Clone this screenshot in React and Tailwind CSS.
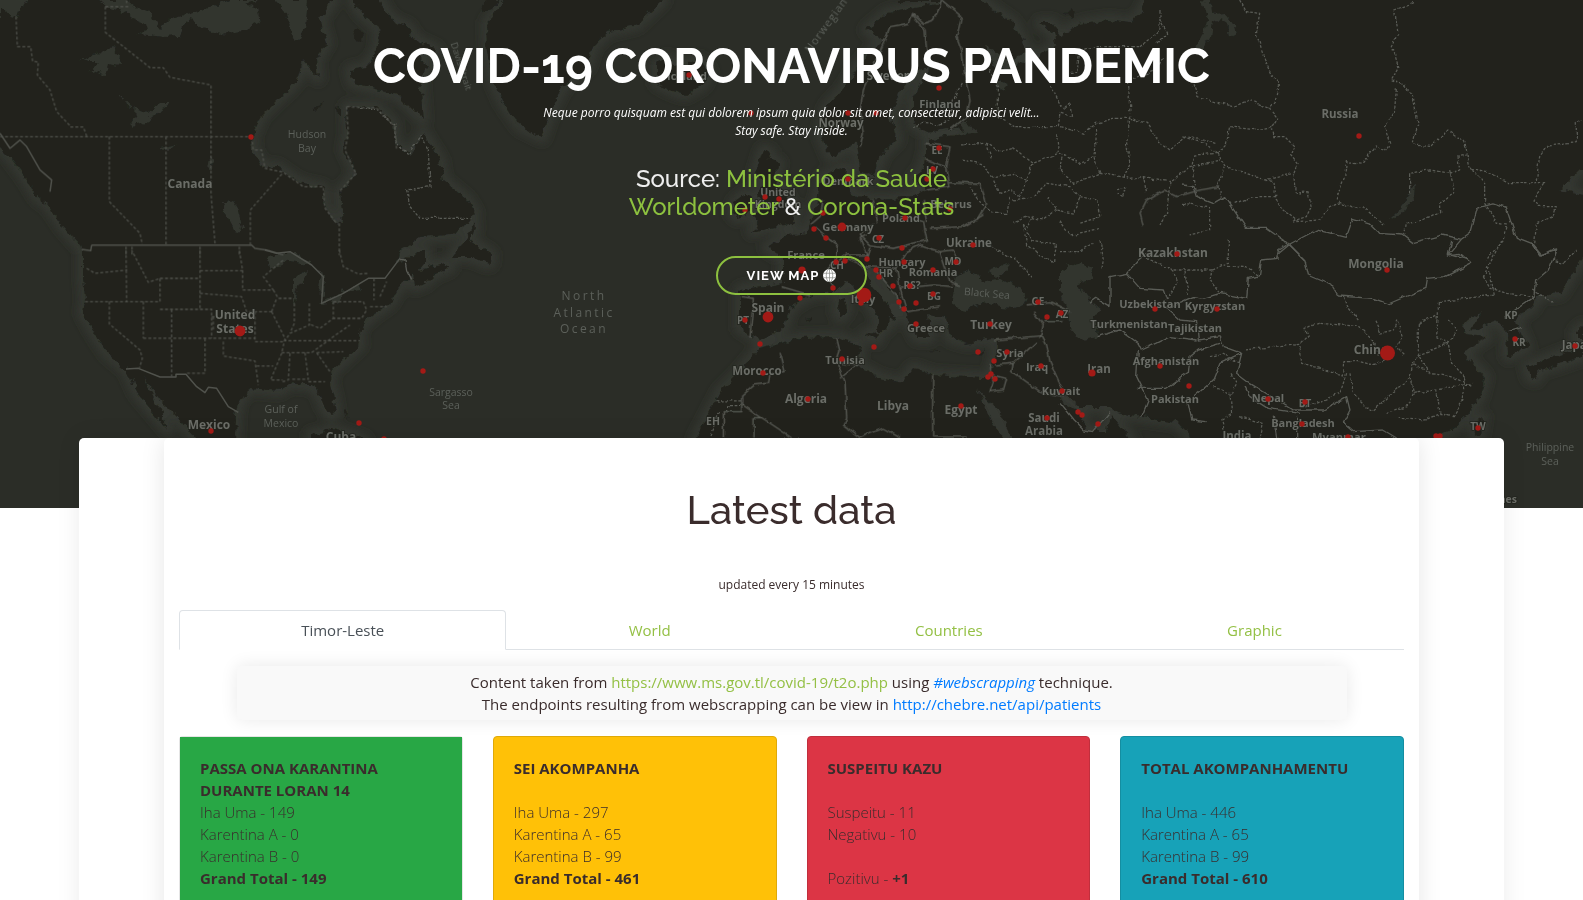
import React from "react";

const LAND = [
  // North America
  "M0 0H334L320 20L327 43L316 60L318 78L303 60L297 80L290 88L277 100L260 117L252 137L253 150L263 168L277 167L300 183L323 188L325 207L333 222L343 223L340 192L357 173L345 150L348 133L347 107L377 107L393 123L395 143L410 155L423 133L440 160L443 180L467 200L475 213L463 227L450 235L420 237L400 250L397 262L425 250L425 263L419 270L443 263L450 268L433 275L425 283L415 287L413 274L400 286L390 303L373 315L362 325L358 333L360 345L347 357L333 370L329 380L333 395L336 413L330 416L323 405L320 395L312 385L303 385L290 383L280 391L268 390L252 388L243 395L238 403L236 415L235 440H200L192 435L177 417L160 400L143 377L160 410L168 430L157 417L137 393L127 370L107 353L92 330L83 313L85 300L83 277L83 250L63 227L50 207L37 197L25 177L10 157L0 147Z",
  // Baffin Island
  "M353 0H380L386 12L395 22L408 27L416 40L437 50L420 54L427 67L420 77L423 120L400 97L380 90L353 83L350 70L367 67L377 50L380 30L360 12Z",
  // Greenland
  "M505 0L487 23L488 50L493 80L503 103L520 127L542 138L547 123L553 107L563 87L587 67L593 47L607 32L637 25L663 0Z",
  // Newfoundland, Iceland, Ireland, Great Britain
  "M474 222L466 240L455 252L454 257L472 257L484 263L490 264L491 254L478 246L470 240L475 228Z",
  "M657 64L668 58L675 66L700 60L709 72L703 85L685 95L670 90L657 83Z",
  "M735 202L745 194L753 197L752 212L738 218L732 213Z",
  "M763 150L770 152L768 158L779 163L773 177L784 190L789 204L797 209L792 224L770 227L752 232L758 222L752 216L764 205L758 195L763 182L756 172Z",
  // Europe and Asia
  "M960 0H980L1013 23L1027 50L1013 60L987 47L993 67L1007 72L1019 64L1036 56L1057 47L1054 34L1040 23H1053L1062 38L1070 28L1087 23L1110 20L1130 23L1140 15L1147 0H1583V167L1560 190L1583 195V257L1560 293L1537 295L1533 307L1515 320L1527 347L1508 357L1507 333L1497 320L1470 330L1483 310L1460 327L1467 335L1487 337L1463 353L1485 377L1480 397L1457 427L1427 440H1193L1177 422L1142 417L1117 413L1110 407L1080 407L1063 393L1058 397L1080 413L1087 430L1107 432L1110 413L1132 440H1013L997 408L983 395L977 388L993 422L1003 440H695L720 392L737 375L760 348L800 338L837 337L860 345L857 365L880 378L903 383L913 368L933 375L983 378L990 378L997 348L993 338L967 343L950 338L947 318L927 315L930 338L917 338L907 318L897 298L877 270L863 268L867 278L887 305L897 317L893 320L888 317L887 328L880 332L878 318L867 298L847 282L833 292L810 295L790 308L783 328L760 340L740 328V290L783 282V258L767 248L787 235L807 232L813 217L817 200L823 177L847 167L845 187L857 197L880 200L913 197L927 190L913 180L923 167L927 150V140L967 133L953 128L927 133L913 123V100L923 83L930 67L917 70L900 90L890 117L897 140L883 153L873 177L860 170L857 143L830 157L820 133L827 107L843 90L857 67L883 40L867 30L887 13L915 8Z",
  // Islands
  "M838 300L845 298L846 312L840 318L837 312ZM865 334L880 332L877 341Z",
  "M1527 367L1540 362L1583 345V356L1554 366L1540 370L1536 379L1530 378ZM1576 332L1583 326V340L1576 340Z",
  "M1474 424L1483 417L1480 435L1475 436ZM311 435L335 430L365 440H311Z",
  // Land running off the edges of the map
  "M30 -14H334V2H30ZM353 -14H380V2H353ZM507 -14H661V2H507ZM900 -14H980V2H900ZM1147 -14H1597V2H1147ZM1581 -14H1597V168H1581ZM-14 20H2V144H-14ZM1581 196H1597V254H1581Z",
];

const SEAS = [
  // Black Sea, Sea of Azov, Caspian
  "M953 292L957 276L967 270L977 275L983 282L1000 278L1020 287L1027 302L1015 308L1000 307L983 302L967 310L951 306Z",
  "M988 271L1010 263L1005 274L996 278Z",
  "M1060 270L1080 262L1094 268L1091 279L1078 284L1088 298L1102 310L1094 315L1097 337L1080 340L1068 327L1067 307L1060 290Z",
  // Arctic waters of Canada
  "M0 0H30L20 8L17 17L9 14L0 8ZM98 0L108 8L125 12L132 18L145 23L147 30L137 34L166 37L178 36L185 22L192 17L199 29L222 34L247 29L260 22L257 8L245 5L262 0L228 0L214 7L194 11L182 16L168 20L160 28L150 12L135 8L125 0Z",
  "M273 0L284 12L296 43L305 28L308 0Z",
  "M80 60L95 55L112 47L120 56L119 66L108 64L105 76L90 70L100 62L86 62Z",
  "M118 94L123 97L127 106L148 113L160 103L172 103L150 117L145 123L130 126L138 113Z",
  // Lakes
  "M268 258L285 251L300 256L313 264L302 263L290 261L277 266L270 270ZM294 304V280L301 273L308 272L299 285ZM316 270L325 276L324 296L318 292L321 277ZM319 303L341 293L341 299L323 304ZM340 290L360 286L362 290L343 292Z",
  "M222 203L231 200L237 210L242 228L236 232L229 219ZM209 158L213 160L211 169L207 169ZM160 146L178 143L165 150Z",
  // Ladoga, Onega, Baikal, Ob gulf
  "M960 122L972 125L977 133L965 134ZM995 80L1007 84L1004 91L997 88Z",
  "M1415 182L1414 198L1404 211L1387 222L1403 206Z",
  "M1203 0H1210L1211 14L1225 13L1234 24L1236 38L1230 36L1228 24L1220 18L1212 22L1210 38L1200 52L1193 50L1205 32L1208 20Z",
];

// Administrative borders, drawn dashed. Each sheet has its own origin and a scale of three.
const DASHED = [
  [0, 0, "M0 410H755M48 50L52 140H92L98 184L115 186L112 225L150 270L170 335L208 375L210 381H250L260 408M316 20V97L450 203H490L510 232L633 255V580L645 730M316 20H385M380 0V15M328 410V605L420 700L427 733M498 410V733M751 735V630L850 517M1018 670V765M1040 320L1130 325L1185 380L1190 450M1040 320L1045 400L1035 450L1068 520L1020 573M755 410L760 450H785L795 505L850 517L910 560H970L975 625L1010 670M378 740V765M396 740V765M600 740V765M718 740V765"],
  [0, 250, "M260 55L285 70L382 60M378 0L380 155M255 155H480V85L445 97L395 0M480 85H600M600 0V178M480 178H635V265M328 155V222L420 300L427 325L418 355M430 155V265M515 178V380M430 265H765M615 265V370H560M600 62H728L718 0M600 130L725 140L740 185H815M728 120H820L790 80L850 30M728 60V120M820 120L835 145H880M815 185L830 145M815 185L855 265L845 310L812 390H848M765 185V275H850M670 275V318L765 333L775 405M770 348H820M883 160V220L870 250M928 160V225L870 250L855 272H1080M1000 155V205L960 235L928 222M1000 155H1090L1100 180L1085 205H1000M845 308H935L1000 260L1050 225M870 310L865 390L848 395M915 308L925 388H870M925 395H975M950 308L990 365M950 308L1030 305M1122 85V150M1140 140L1160 95M1110 170H1160M1018 0L1030 50L1075 72L1105 70M635 200H650M640 200V240"],
  [360, 0, "M0 325L45 325L70 350L105 375V430L145 465L185 405L205 450L210 560L140 570L150 620L180 655H340"],
  [780, 0, "M950 140H1080L1140 90V30M1140 60L1160 100L1130 130M870 220H890L900 150L945 140M1045 235L1050 340M1050 240L1130 210L1150 170M810 255L850 330L870 310L875 350L840 340L835 380L705 380L655 350V260L625 200M840 380L910 400L950 370L1000 355H1050L1100 370L1130 420L1170 450L1220 410L1310 430M1050 350L1040 430L1050 490L1030 530M830 400L835 460L760 490L735 540L700 520L640 530L600 490L540 480M540 435L620 430L660 455L700 445L760 490M620 430L635 480M840 460L900 490L940 470L960 520L880 550L840 510L850 470M740 540L720 590L690 570L660 580L640 540M950 390L945 470M960 520L1050 535L1090 530L1170 545L1230 500L1320 480M1090 530L1100 580M1170 545L1160 640L1140 675M700 600L760 590L800 550L870 560L900 590L880 640L830 630L800 590M690 590L680 640L640 640L600 610L570 560M830 630L790 660L740 650L700 670M900 590L950 600L960 650L900 670M1010 570L1040 560L1030 590L1010 580M400 380L430 370L470 375L510 360L520 300L545 250"],
  [1183, 0, "M170 0L190 35L230 40L220 100L245 180L265 225L290 250L280 300L260 325L285 355L265 385L270 410H305L335 440L325 465L345 490L335 520L340 580L375 575L385 620L370 650L325 665M30 250L45 290L150 320L200 300L260 325M265 380L220 390L140 380L130 430L105 460L60 430L0 410M105 460L35 465L30 500L40 580M105 460L125 500L190 520L245 540L335 520M125 500L105 550L115 590M245 540L270 545L275 590L300 630L345 665M155 610L210 590L275 590M690 8L635 30L645 100L625 140L645 205L625 242L665 255L690 290L705 370L690 435L745 440L795 390L845 425L860 500L905 545V610L945 670L970 675L960 720L910 780M640 265L635 330L605 380L620 430L605 455L580 435L540 490L490 485L485 530L460 600L510 625L540 620L600 675M680 580V520L740 510L800 520L830 510L825 470L850 465M800 510L815 575L770 610V635L720 660L670 672L665 705M865 505L910 515L980 548H1085L1050 600L1070 620H1120L1110 650L1060 670L1055 735M1060 540L1070 470L1095 435L1180 425V370L1200 360M340 665L410 660L440 620L475 605M0 610L80 620V690L20 705"],
  [1060, 240, "M260 55L340 90H455L450 120L475 155L500 160M340 90L350 130L320 180M375 95L385 165M505 0V70M120 0L130 60L125 90M0 35H60L100 10M455 90L490 75L560 80L598 108M555 330L635 320L720 310L745 285L735 265L775 250L845 255L900 260L945 310L955 350M850 170L860 200L895 240M720 315L725 370L850 405L855 365L900 365L940 375L990 350M870 400L880 460L935 515L975 480L1050 410L1060 370L1110 400L1175 410L1240 440M945 245L960 280L1000 270L1010 240L1030 290L1010 320L1030 340M1075 250V340L1060 370M1075 250L1135 220V185L1220 175L1300 165M1135 225L1130 290L1165 310L1075 345L1110 400M1165 240L1190 270L1165 310L1175 370L1215 410L1205 490M1050 410L1060 460L1045 500L980 520M1060 460L1130 450L1175 440L1240 430M1130 450L1140 520L1095 540L1010 530M1140 520L1180 530L1210 480M450 350L490 340L540 370M460 440L510 460L515 520L485 540L500 594M540 530L610 550L600 594M510 400L530 430L515 460M860 400L840 460L770 490L720 500M1270 110L1325 0M1270 110L1290 145L1340 160L1420 170M1300 165L1285 90M1490 30L1480 60L1510 70L1550 30M1480 190L1420 150"],
  [700, 215, "M970 30L1000 80L1070 90L1060 140L1020 120L980 90ZM1000 0L980 40M1080 20L1110 60L1200 40M850 80L940 130L1000 190M50 558H125M80 590V572H125M30 660L60 590"],
];

const SOLID = [
  [0, 0, "M275 735H755L765 745L800 750L850 765M0 400L30 445L60 420L80 440L120 510L155 540L150 575M275 735L272 752L245 748"],
  [0, 250, "M378 357L415 355L480 381H528V373H558L590 410L615 428L625 412L650 415L685 470L715 487M795 0L830 10L870 5L935 45L970 80L965 160L1030 130L1105 85H1155L1200 25"],
  [400, 220, "M0 118L15 120L20 150L35 178"],
  [780, 0, "M240 440L250 400L240 330L250 270L280 200L310 130L330 80L385 70L395 40L430 70L460 60L480 20L485 0M395 45L435 90L440 150L450 200M485 0L545 50L530 110L545 150L555 230L570 300L560 350L510 390M435 430L510 440L500 500L440 480M500 500L510 560L440 570M510 545L600 550L620 610L590 660M1320 560L1260 570L1190 590L1150 570L1100 600L1080 640L1090 675M130 600L120 650L90 675M280 600L290 670M430 600L440 670"],
  [700, 215, "M345 35L390 75L412 90L405 140L370 170M480 60L510 90L580 100L680 75L670 20L600 0M500 60L480 70L500 120L440 120L370 170L400 215M440 130L500 155L590 160L620 110L660 90L720 110L750 200L780 215M500 130L510 95M590 160L600 220L700 210L760 215M600 220L620 290L720 275M600 280L590 240L530 170M520 30L480 60M690 40L790 35L850 0M720 110L760 105L780 150M245 215L330 240M125 245L160 250L150 365M240 410L255 470L210 480L205 505L160 510L125 540V590H70V665M125 568L275 668M162 668V608H187M410 370L420 410L410 440L435 500L440 610L430 630L480 668M415 440L470 450L420 490M480 668L550 640L600 668M698 480V663H800M885 375L1025 362L1040 390L1050 440L1090 530M885 450L940 445L1010 380M870 450L880 500L870 530L910 525L920 490L880 480M940 445L935 470L1020 530L1090 545M980 270L1050 260L1110 290M1000 290L1030 330L1020 370M1030 320L1090 320"],
  [1183, 0, "M0 555L30 560L40 590L90 610L125 590L190 685H250L300 720L315 735L400 690L490 712L510 655L560 670L590 700L660 705L690 728L780 705L835 718L860 700L880 625L930 612L970 625L1000 715L1050 735L1075 765L1115 745M835 718L800 760L850 775M315 735L285 760V780M320 735L365 780"],
  [1060, 240, "M150 200V110L200 100L240 145L310 150L320 180M150 200L110 175L90 190M200 100L235 60L260 40M320 205L400 170L430 175L480 160L560 175L565 115L598 108L605 60L650 55L655 30L685 10L735 60L745 105L815 135L835 168L940 175L985 192L1095 145L1100 115L1155 110L1235 70L1200 40L1165 45L1175 0M320 205L360 240L410 245L415 300L480 290L490 320L545 340M110 290L180 270L235 310L245 330L290 310L330 290L410 300M235 330L230 410L265 480L245 530M230 445L320 445L385 400L390 350L415 330L480 310M380 490L460 420L480 370L545 340L530 400L570 430L700 510L790 510M555 440L570 470L625 505L720 520M385 490L395 540L440 545M640 530L650 594M710 530V594M790 510L860 470L870 510L850 550L880 575L970 570L1010 594M1330 235L1365 210L1425 170L1430 120L1465 90L1490 30L1440 45L1415 10M1345 275L1385 262M70 570L100 575L150 515M0 490L40 540L70 570"],
];

const LABELS = [
  ["Canada", 190, 184], ["United", 235, 315], ["States", 235, 329], ["Mexico", 209, 425], ["Cuba", 341, 437],
  ["Spain", 768, 308], ["PT", 743, 320, 10], ["Morocco", 757, 371, 11.5], ["EH", 713, 421, 10.5], ["Algeria", 806, 399],
  ["Libya", 893, 406], ["Egypt", 961, 410], ["Tunisia", 845, 360, 11], ["France", 806, 255, 11.2], ["Germany", 848, 227, 11.2],
  ["Poland", 901, 218, 11], ["CZ", 878, 239, 10], ["Ukraine", 969, 243, 11.5], ["Hungary", 902, 262, 11], ["MD", 953, 261, 10],
  ["Romania", 933, 272, 11], ["HR", 886, 273, 10], ["CH", 837, 265, 10], ["RS?", 912, 285, 10], ["BG", 934, 296, 10],
  ["Italy", 863, 299, 11], ["Greece", 926, 328, 11], ["Turkey", 991, 325], ["GE", 1038, 301, 10], ["AZ", 1062, 314, 10],
  ["Syria", 1010, 353, 11], ["Iraq", 1037, 367, 11], ["Kuwait", 1061, 391, 11], ["Saudi", 1044, 418, 11.5], ["Arabia", 1044, 431, 11.5],
  ["Turkmenistan", 1129, 324, 11], ["Kazakhstan", 1173, 253, 12], ["Uzbekistan", 1150, 304, 11], ["Kyrgyzstan", 1215, 306, 11],
  ["Tajikistan", 1195, 328, 11], ["Afghanistan", 1166, 361, 11], ["Iran", 1099, 369, 11.5], ["Pakistan", 1175, 399, 11],
  ["Nepal", 1268, 398, 11], ["BT", 1305, 403, 10], ["Bangladesh", 1303, 423, 11], ["India", 1237, 436, 11.5], ["Myanmar", 1339, 437, 11.2],
  ["China", 1371, 350, 12], ["Mongolia", 1376, 264, 12], ["KP", 1511, 315, 10], ["KR", 1519, 342, 10], ["Japan", 1578, 345, 11.5],
  ["TW", 1478, 426, 10], ["Philippines", 1488, 499, 10.5], ["Russia", 1340, 114, 11.5], ["Finland", 940, 104, 11.2], ["Norway", 841, 123, 11.5],
  ["Sweden", 889, 76, 11.5], ["EE", 937, 150, 10], ["LV", 932, 170, 10], ["Denmark", 848, 181, 11], ["Belarus", 951, 204, 11],
  ["United", 778, 192, 10.5], ["Kingdom", 778, 204, 10.5], ["Iceland", 687, 76, 11],
];

const WATER_LABELS = [
  ["Hudson", 307, 134], ["Bay", 307, 148], ["Gulf of", 281, 409], ["Mexico", 281, 423],
  ["Sargasso", 451, 392], ["Sea", 451, 405], ["Philippine", 1550, 447], ["Sea", 1550, 461],
];

const DOTS = [
  [251, 137], [240, 331, 5.4], [211, 431], [359, 423], [384, 439], [423, 371], [1359, 136], [768, 317, 5.4], [745, 320],
  [760, 344], [763, 373], [689, 75], [751, 113], [765, 197], [779, 199], [745, 210], [939, 88], [848, 113], [876, 113],
  [939, 148], [933, 169], [927, 179], [848, 179], [823, 213], [905, 218], [950, 209], [842, 227, 4.4], [814, 229],
  [826, 238], [879, 238], [902, 248], [973, 245], [904, 262], [956, 262], [867, 259], [845, 261], [836, 262],
  [802, 270, 3.6], [876, 270], [879, 277], [933, 270], [893, 286], [910, 286], [933, 294], [833, 288], [800, 298],
  [864, 295, 7.3], [861, 303], [899, 302], [916, 303], [904, 309], [916, 324], [990, 324], [1038, 302], [1047, 317],
  [1061, 313], [874, 347], [842, 359], [978, 352], [1007, 352], [994, 361], [1041, 366], [991, 374], [988, 377],
  [995, 379], [1092, 373, 3.6], [1062, 391], [808, 399], [961, 406], [1047, 418], [1078, 412], [1082, 415], [1098, 424],
  [1177, 254], [1387, 270], [1155, 309], [1217, 309], [1160, 366], [1189, 386], [1268, 399], [1305, 402], [1302, 424],
  [1348, 437], [1387.5, 353, 7.5], [1515, 339], [1575, 346], [1436, 436], [1440, 436], [1478, 428],
];

function WorldMap() {
  return (
    <svg className="absolute inset-0 h-full w-full font-['Open_Sans','Noto_Sans',sans-serif]" viewBox="0 0 1583 508" aria-hidden="true">
      <defs>
        <filter id="coast" x="-14" y="-14" width="1611" height="536" filterUnits="userSpaceOnUse">
          <feTurbulence type="fractalNoise" baseFrequency="0.12" numOctaves="3" seed="4" />
          <feDisplacementMap in="SourceGraphic" scale="9" xChannelSelector="R" yChannelSelector="G" />
        </filter>
        <filter id="wobble" x="0" y="0" width="1583" height="508" filterUnits="userSpaceOnUse">
          <feTurbulence type="fractalNoise" baseFrequency="0.1" numOctaves="2" seed="9" />
          <feDisplacementMap in="SourceGraphic" scale="5" xChannelSelector="R" yChannelSelector="G" />
        </filter>
        <filter id="glow" x="-14" y="-14" width="1611" height="536" filterUnits="userSpaceOnUse">
          <feGaussianBlur stdDeviation="4" />
        </filter>
      </defs>
      <rect width="1583" height="508" fill="#2b2d27" />
      <g filter="url(#glow)" fill="none" stroke="#353832" strokeWidth="11" strokeLinejoin="round">
        {LAND.slice(0, -1).map((d) => <path key={d} d={d} />)}
      </g>
      <g filter="url(#coast)">
        <g fill="#21231d">{LAND.map((d) => <path key={d} d={d} />)}</g>
        <g fill="#31342e">{SEAS.map((d) => <path key={d} d={d} />)}</g>
        <g fill="#21231d">
          <path d="M353 32L358 27L365 31L363 42L357 43ZM313 108L324 102L322 107L316 111ZM336 108L341 107V116L337 116ZM480 5L488 0H500L493 10L483 12ZM1066 13L1072 8L1076 12L1071 19Z" />
          <path d="M926 350L940 351L938 352ZM975 353L986 350L980 356ZM345 408L349 412L348 418ZM806 318L812 317L810 321Z" />
        </g>
      </g>
      <g fill="none" stroke="#5a5c56" strokeLinejoin="round">
        <g filter="url(#wobble)">
          {DASHED.slice(2).map(([x, y, d]) => (
            <path key={d} transform={`translate(${x} ${y}) scale(.3333)`} d={d} strokeWidth="3.8" strokeDasharray="8 5" />
          ))}
          {SOLID.slice(2).map(([x, y, d]) => (
            <path key={d} transform={`translate(${x} ${y}) scale(.3333)`} d={d} strokeWidth="4" />
          ))}
        </g>
        <g stroke="#50524c">
          {DASHED.slice(0, 2).map(([x, y, d]) => (
            <path key={d} transform={`translate(${x} ${y}) scale(.3333)`} d={d} strokeWidth="3.8" strokeDasharray="9 6" />
          ))}
          {SOLID.slice(0, 2).map(([x, y, d]) => (
            <path key={d} transform={`translate(${x} ${y}) scale(.3333)`} d={d} strokeWidth="4.5" />
          ))}
        </g>
      </g>
      <g fill="#6b6d67" stroke="#22241e" strokeWidth="1.6" paintOrder="stroke" fontWeight="700" textAnchor="middle">
        {LABELS.map(([t, x, y, s = 12]) => (
          <text key={`${t}${x}`} x={x} y={y + 4} fontSize={s}>{t}</text>
        ))}
      </g>
      <g fill="#5c605a" textAnchor="middle" fontSize="10.5">
        {WATER_LABELS.map(([t, x, y]) => (
          <text key={`${t}${x}`} x={x} y={y + 4}>{t}</text>
        ))}
        <g fontSize="12" letterSpacing="2.4">
          <text x="584" y="300">North</text>
          <text x="584" y="316.5">Atlantic</text>
          <text x="584" y="333">Ocean</text>
        </g>
        <text x="987" y="297" transform="rotate(5 987 294)">Black Sea</text>
        <text x="826" y="29" transform="rotate(-54 826 25)" fontSize="11" letterSpacing="1">Norwegian</text>
        <text x="462" y="70" transform="rotate(72 462 66)" fontSize="9.5">Davis Strait</text>
      </g>
      <g fill="#a31a16">
        {DOTS.map(([x, y, r = 2.7]) => <circle key={`${x}-${y}`} cx={x} cy={y} r={r} />)}
      </g>
    </svg>
  );
}

function Globe() {
  return (
    <svg className="h-[13px] w-[13px]" viewBox="0 0 26 26" aria-hidden="true">
      <circle cx="13" cy="13" r="13" fill="#fff" />
      <g fill="none" stroke="#8b8e88" strokeWidth="1.5">
        <ellipse cx="13" cy="13" rx="6.5" ry="13" />
        <path d="M13 0V26M1 8.5H25M1 17.5H25" />
      </g>
    </svg>
  );
}

function Hero() {
  return (
    <header className="relative h-[508px] overflow-hidden bg-[#2b2d27]">
      <WorldMap />
      <div className="relative flex flex-col items-center pt-[37px] text-center text-white">
        <h1 className="font-[Raleway,Lato,sans-serif] text-[48px] leading-[58px] font-bold whitespace-nowrap oldstyle-nums">
          COVID-19 CORONAVIRUS PANDEMIC
        </h1>
        <p className="mt-[9px] text-[12px] leading-[18px] italic">
          Neque porro quisquam est qui dolorem ipsum quia dolor sit amet, consectetur, adipisci velit...
          <br />
          Stay safe. Stay inside.
        </p>
        <h2 className="mt-[25px] font-[Raleway,Lato,sans-serif] text-[24px] leading-[28px] font-medium text-[#eee]">
          Source: <a className="text-[#8dc13f]">Ministério da Saúde</a>
          <br />
          <a className="text-[#8dc13f]">Worldometer</a> &amp; <a className="text-[#8dc13f]">Corona-Stats</a>
        </h2>
        <a className="mt-[35px] flex h-[39px] w-[151px] items-center justify-center gap-[4px] rounded-full border-2 border-[#8dc03f] font-[Raleway,Lato,sans-serif] text-[13px] font-bold tracking-[1px]">
          VIEW MAP <Globe />
        </a>
      </div>
    </header>
  );
}

const TABS = ["Timor-Leste", "World", "Countries", "Graphic"];

function Tabs() {
  return (
    <nav className="flex border-b border-[#dee2e6]">
      {TABS.map((tab, i) => (
        <a
          key={tab}
          className={
            i === 0
              ? "-mb-px h-[40px] flex-auto rounded-t border border-b-white border-[#dee2e6] bg-white px-4 pt-[8px] text-center text-[#495057]"
              : "-mb-px h-[40px] flex-auto border border-transparent px-4 pt-[8px] text-center text-[#94c045]"
          }
        >
          {tab}
        </a>
      ))}
    </nav>
  );
}

function Card({ className, title, children }) {
  return (
    <section className={className}>
      <div className="h-[44px] font-bold">{title}</div>
      {children}
    </section>
  );
}

export default function App() {
  return (
    <div className="h-[900px] overflow-hidden bg-white font-['Open_Sans',sans-serif] text-[15px] leading-[22px] text-[#3a2c2c]">
      <Hero />
      <main className="relative mx-[79px] -mt-[70px] h-[600px] overflow-hidden rounded-[5px] bg-white shadow-[0_0_25px_rgba(0,0,0,0.08)]">
        <div className="mx-[85px] h-full rounded-[5px] bg-white px-[15px] shadow-[0_0_25px_rgba(0,0,0,0.1)]">
          <h2 className="pt-[48px] text-center font-[Raleway,Lato,sans-serif] text-[40px] leading-[48px] font-medium">Latest data</h2>
          <p className="mt-[42px] mb-[16px] text-center text-[12px] leading-[18px]">updated every 15 minutes</p>
          <Tabs />
          <div className="mx-auto mt-[16px] w-[1110px] rounded-[5px] bg-[#f9f9f9] py-[5px] text-center shadow-[0_0_18px_rgba(0,0,0,0.09)]">
            Content taken from <a className="text-[#94c045]">https://www.ms.gov.tl/covid-19/t2o.php</a> using{" "}
            <i className="text-[#007bff]">#webscrapping</i> technique.
            <br />
            The endpoints resulting from webscrapping can be view in{" "}
            <a className="text-[#007bff]">http://chebre.net/api/patients</a>
          </div>
          <div className="relative mt-[16px] grid grid-cols-4 gap-[30px] font-[350]">
            <div className="rounded border border-black/10 bg-white">
              <Card className="h-[220px] bg-[#28a745] p-5" title={<>PASSA ONA KARANTINA<br />DURANTE LORAN 14</>}>
                Iha Uma - 149<br />Karentina A - 0<br />Karentina B - 0<br />
                <b className="font-bold">Grand Total - 149</b>
              </Card>
            </div>
            <Card className="rounded border border-[#dfa908] bg-[#ffc107] p-5" title="SEI AKOMPANHA">
              Iha Uma - 297<br />Karentina A - 65<br />Karentina B - 99<br />
              <b className="font-bold">Grand Total - 461</b>
            </Card>
            <Card className="rounded border border-[#c02f3d] bg-[#dc3545] p-5" title="SUSPEITU KAZU">
              Suspeitu - 11<br />Negativu - 10<br /><br />
              Pozitivu - <b className="font-bold">+1</b>
            </Card>
            <Card className="rounded border border-[#148ea1] bg-[#17a2b8] p-5" title="TOTAL AKOMPANHAMENTU">
              Iha Uma - 446<br />Karentina A - 65<br />Karentina B - 99<br />
              <b className="font-bold">Grand Total - 610</b>
            </Card>
          </div>
        </div>
      </main>
    </div>
  );
}
